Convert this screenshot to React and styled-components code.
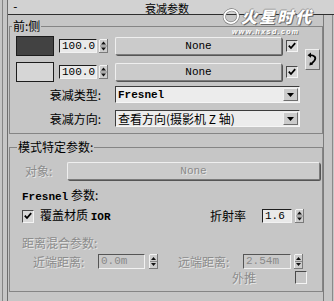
import React from "react";
import styled, { createGlobalStyle } from "styled-components";

const CJK = `"Noto Sans CJK SC", "Noto Sans", sans-serif`;
const MONO = `"Liberation Mono", "Noto Sans CJK SC", monospace`;

const GlobalStyle = createGlobalStyle`
  html, body { margin: 0; padding: 0; }
  body {
    background: #c6c6c6;
    font-family: ${CJK};
    font-size: 12px;
    color: #000;
  }
`;

const Page = styled.div`
  position: relative;
  width: 334px;
  height: 301px;
  display: flex;
  overflow: hidden;
  background: #c6c6c6;
`;

const LeftRail = styled.div`
  flex-shrink: 0;
  margin-left: 2px;
  width: 4px;
  border-left: 1px solid #858585;
  border-right: 1px solid #6e6e6e;
`;

const Main = styled.div`
  flex: 1;
  min-width: 0;
  display: flex;
  flex-direction: column;
`;

const TitleBar = styled.div`
  height: 14px;
  display: flex;
  align-items: center;
  padding: 0 12px 0 4px;
  background: #d2d2d2;
  border-bottom: 1px solid #2e2e2e;
`;

const Collapse = styled.span`
  width: 12px;
  font-family: ${MONO};
  font-size: 11px;
  line-height: 10px;
`;

const Title = styled.span`
  flex: 1;
  text-align: center;
  font-size: 11px;
  line-height: 14px;
  padding-top: 1px;
`;

const Spacer = styled.span`
  width: 12px;
`;

const BodyRow = styled.div`
  flex: 1;
  display: flex;
`;

const Content = styled.div`
  flex: 1;
  padding: 4px 0 0 1px;
`;

const RightRail = styled.div`
  width: 9px;
  margin-right: 1px;
  border-left: 1px solid #7c7c7c;
  border-right: 1px solid #8a8a8a;
`;

const Group = styled.fieldset`
  margin: ${(p) => p.$top || 0}px 0 0 0;
  padding: ${(p) => p.$pad};
  border: 1px solid #858585;
  min-width: 0;
`;

const Legend = styled.legend`
  margin-left: ${(p) => p.$shift}px;
  padding: 0 1px;
  font-size: 12px;
  line-height: 14px;
`;

const TopArea = styled.div`
  display: flex;
  align-items: center;
`;

const SwatchColumn = styled.div`
  display: flex;
  flex-direction: column;
  gap: 6px;
`;

const ColorRow = styled.div`
  display: flex;
  align-items: center;
  height: 20px;
`;

const Swatch = styled.div`
  box-sizing: border-box;
  width: 38px;
  height: 20px;
  margin-right: 5px;
  background: ${(p) => p.$color};
  border: 1px solid #1c1c1c;
`;

const Spinner = styled.div`
  display: flex;
  align-items: center;
  gap: ${(p) => p.$gap || 2}px;
`;

const NumField = styled.div`
  box-sizing: border-box;
  width: ${(p) => p.$w}px;
  height: ${(p) => p.$h || 14}px;
  padding-left: 2px;
  background: ${(p) => (p.$disabled ? "#c9c9c9" : "#e9e9e9")};
  border-top: 1px solid ${(p) => (p.$disabled ? "#555" : "#1e1e1e")};
  border-left: 1px solid ${(p) => (p.$disabled ? "#555" : "#1e1e1e")};
  border-bottom: 1px solid #f2f2f2;
  border-right: 1px solid #f2f2f2;
  font-family: ${MONO};
  font-size: 11px;
  line-height: ${(p) => (p.$h || 14) - 2}px;
  color: ${(p) => (p.$disabled ? "#8a8a8a" : "#000")};
  white-space: nowrap;
`;

const ArrowBox = styled.svg`
  display: block;
  flex-shrink: 0;
`;

const SpinArrows = ({ h = 14, w = 9, disabled }) => {
  const c = disabled ? "#6a6a6a" : "#111";
  const mid = h / 2;
  return (
    <ArrowBox width={w} height={h} viewBox={`0 0 ${w} ${h}`}>
      <rect x="0.5" y="0.5" width={w - 1} height={h - 1} fill="#cdcdcd" stroke="#7a7a7a" />
      <line x1="0.5" y1="0.5" x2={w - 1} y2="0.5" stroke="#f2f2f2" />
      <line x1="0.5" y1="0.5" x2="0.5" y2={h - 1} stroke="#f2f2f2" />
      <line x1="1" y1={mid} x2={w - 1} y2={mid} stroke="#8a8a8a" />
      <polygon points={`${w / 2 - 2.5},${mid - 1.5} ${w / 2 + 2.5},${mid - 1.5} ${w / 2},${mid - 4.5}`} fill={c} />
      <polygon points={`${w / 2 - 2.5},${mid + 1.5} ${w / 2 + 2.5},${mid + 1.5} ${w / 2},${mid + 4.5}`} fill={c} />
    </ArrowBox>
  );
};

const MapButton = styled.div`
  box-sizing: border-box;
  ${(p) => (p.$w ? `width: ${p.$w}px;` : "flex: 1;")}
  height: 18px;
  margin-left: ${(p) => p.$ml || 0}px;
  display: flex;
  align-items: center;
  justify-content: center;
  background: #cbcbcb;
  border: 1px solid #7b7b7b;
  border-top-color: #efefef;
  border-left-color: #efefef;
  border-radius: 2px;
  box-shadow: 1px 1px 0 #555;
  font-family: ${MONO};
  font-size: 11px;
  color: ${(p) => (p.$disabled ? "#8a8a8a" : "#000")};
  text-shadow: ${(p) => (p.$disabled ? "1px 1px 0 #e6e6e6" : "none")};
`;

const CheckBox = styled.div`
  box-sizing: border-box;
  flex-shrink: 0;
  width: 12px;
  height: ${(p) => p.$h || 12}px;
  margin-left: ${(p) => p.$ml || 0}px;
  background: ${(p) => (p.$disabled ? "#c6c6c6" : "#d9d9d9")};
  border-top: 1px solid #4a4a4a;
  border-left: 1px solid #4a4a4a;
  border-bottom: 1px solid #f4f4f4;
  border-right: 1px solid #f4f4f4;
  display: flex;
  align-items: center;
  justify-content: center;
`;

const Tick = () => (
  <svg width="8" height="8" viewBox="0 0 8 8">
    <path d="M0.8 3.6 L3 6 L7.2 1.2" fill="none" stroke="#000" strokeWidth="1.8" />
  </svg>
);

const SwapButton = styled.div`
  box-sizing: border-box;
  width: 15px;
  height: 21px;
  margin-left: 7px;
  display: flex;
  align-items: center;
  justify-content: center;
  background: #cbcbcb;
  border: 1px solid #6e6e6e;
  border-top-color: #f0f0f0;
  border-left-color: #f0f0f0;
`;

const SwapIcon = () => (
  <svg width="11" height="15" viewBox="0 0 11 15">
    <path d="M2.5 3.2 C7.5 3 9.5 5.5 7.5 8.5 L4.2 12.2" fill="none" stroke="#000" strokeWidth="1.8" />
    <polygon points="0.5,3.2 4,0.6 4,5.8" fill="#000" />
    <polygon points="2.4,13.6 3,10 6,12.6" fill="#000" />
  </svg>
);

const FieldRow = styled.div`
  display: flex;
  align-items: center;
  height: ${(p) => p.$h || 17}px;
  margin-top: ${(p) => p.$mt || 0}px;
`;

const FieldLabel = styled.span`
  box-sizing: border-box;
  flex-shrink: 0;
  width: ${(p) => p.$w}px;
  margin-left: ${(p) => p.$ml || 0}px;
  padding-right: ${(p) => p.$pr || 0}px;
  text-align: ${(p) => p.$align || "left"};
  font-size: 12px;
  line-height: 14px;
  white-space: nowrap;
  color: ${(p) => (p.$disabled ? "#8c8c8c" : "#000")};
  text-shadow: ${(p) => (p.$disabled ? "1px 1px 0 #e6e6e6" : "none")};
`;

const Dropdown = styled.div`
  box-sizing: border-box;
  width: 185px;
  height: 17px;
  display: flex;
  align-items: center;
  background: #ececec;
  border-top: 1px solid #3c3c3c;
  border-left: 1px solid #3c3c3c;
  border-bottom: 1px solid #f6f6f6;
  border-right: 1px solid #f6f6f6;
`;

const DropText = styled.span`
  flex: 1;
  padding-left: 2px;
  font-family: ${(p) => (p.$mono ? MONO : CJK)};
  font-size: ${(p) => (p.$mono ? 11 : 12)}px;
  font-weight: ${(p) => (p.$mono ? 700 : 400)};
  line-height: 14px;
  white-space: nowrap;
`;

const DropArrow = styled.div`
  box-sizing: border-box;
  width: 15px;
  height: 13px;
  margin-right: 1px;
  display: flex;
  align-items: center;
  justify-content: center;
  background: #cbcbcb;
  border: 1px solid #6e6e6e;
  border-top-color: #f0f0f0;
  border-left-color: #f0f0f0;
`;

const Caret = () => (
  <svg width="7" height="4" viewBox="0 0 7 4">
    <polygon points="0,0 7,0 3.5,4" fill="#000" />
  </svg>
);

const Heading = styled.div`
  margin-top: ${(p) => p.$mt}px;
  font-size: 12px;
  line-height: 14px;
  white-space: nowrap;
  color: ${(p) => (p.$disabled ? "#8c8c8c" : "#000")};
  text-shadow: ${(p) => (p.$disabled ? "1px 1px 0 #e6e6e6" : "none")};
`;

const Mono = styled.span`
  font-family: ${MONO};
  font-size: 11px;
  font-weight: 700;
`;

const Watermark = styled.div`
  position: absolute;
  top: 4px;
  left: 222px;
  width: 104px;
  color: #fff;
  pointer-events: none;
`;

const MarkLine = styled.div`
  display: flex;
  align-items: center;
  gap: 1px;
  height: 24px;
`;

const MarkText = styled.span`
  font-family: ${CJK};
  font-size: 16px;
  font-weight: 900;
  font-style: italic;
  line-height: 24px;
  letter-spacing: 2px;
  text-shadow: 1px 1px 0 #6b6b6b, -1px 0 0 #8a8a8a, 0 -1px 0 #9a9a9a;
`;

const MarkUrl = styled.div`
  margin: 0 0 0 10px;
  font-family: "Liberation Sans", sans-serif;
  font-size: 7px;
  font-weight: 700;
  font-style: italic;
  letter-spacing: 1.4px;
  line-height: 8px;
  text-shadow: 1px 1px 0 #777;
`;

const MarkSwoosh = () => (
  <svg width="18" height="18" viewBox="0 0 18 18">
    <ellipse cx="9" cy="9.5" rx="7" ry="6.5" fill="none" stroke="#777" strokeWidth="3" transform="rotate(-25 9 9)" />
    <ellipse cx="9" cy="9.5" rx="7" ry="6.5" fill="none" stroke="#fff" strokeWidth="1.8" transform="rotate(-25 9 9)" />
  </svg>
);

export default function App() {
  return (
    <Page>
      <GlobalStyle />
      <LeftRail />
      <Main>
        <TitleBar>
          <Collapse>-</Collapse>
          <Title>衰减参数</Title>
          <Spacer />
        </TitleBar>
        <BodyRow>
          <Content>
            <Group $pad="3px 2px 6px 6px">
              <Legend $shift={-4}>前:侧</Legend>
              <TopArea>
                <SwatchColumn>
                  <ColorRow>
                    <Swatch $color="#424242" />
                    <Spinner>
                      <NumField $w={38}>100.0</NumField>
                      <SpinArrows />
                    </Spinner>
                    <MapButton $w={167} $ml={7}>None</MapButton>
                    <CheckBox $ml={4}>
                      <Tick />
                    </CheckBox>
                  </ColorRow>
                  <ColorRow>
                    <Swatch $color="#d6d6d6" />
                    <Spinner>
                      <NumField $w={38}>100.0</NumField>
                      <SpinArrows />
                    </Spinner>
                    <MapButton $w={167} $ml={7}>None</MapButton>
                    <CheckBox $ml={4}>
                      <Tick />
                    </CheckBox>
                  </ColorRow>
                </SwatchColumn>
                <SwapButton>
                  <SwapIcon />
                </SwapButton>
              </TopArea>
              <FieldRow $mt={4}>
                <FieldLabel $w={99} $pr={14} $align="right">衰减类型:</FieldLabel>
                <Dropdown>
                  <DropText $mono>Fresnel</DropText>
                  <DropArrow>
                    <Caret />
                  </DropArrow>
                </Dropdown>
              </FieldRow>
              <FieldRow $mt={7}>
                <FieldLabel $w={99} $pr={14} $align="right">衰减方向:</FieldLabel>
                <Dropdown>
                  <DropText>查看方向(摄影机 Z 轴)</DropText>
                  <DropArrow>
                    <Caret />
                  </DropArrow>
                </Dropdown>
              </FieldRow>
            </Group>

            <Group $top={6} $pad="8px 2px 6px 12px">
              <Legend $shift={-5}>模式特定参数:</Legend>
              <FieldRow $h={18}>
                <FieldLabel $w={42} $ml={3} $disabled>对象:</FieldLabel>
                <MapButton $disabled>None</MapButton>
              </FieldRow>
              <Heading $mt={8}>
                <Mono>Fresnel</Mono> 参数:
              </Heading>
              <FieldRow $h={14} $mt={5}>
                <CheckBox $h={13}>
                  <Tick />
                </CheckBox>
                <FieldLabel $w={170} $ml={6}>
                  覆盖材质 <Mono>IOR</Mono>
                </FieldLabel>
                <FieldLabel $w={52}>折射率</FieldLabel>
                <Spinner $gap={3}>
                  <NumField $w={30}>1.6</NumField>
                  <SpinArrows />
                </Spinner>
              </FieldRow>
              <Heading $mt={13} $disabled>距离混合参数:</Heading>
              <FieldRow $h={15} $mt={4}>
                <FieldLabel $w={65} $ml={11} $disabled>近端距离:</FieldLabel>
                <Spinner $gap={4}>
                  <NumField $w={47} $h={15} $disabled>0.0m</NumField>
                  <SpinArrows h={15} />
                </Spinner>
                <FieldLabel $w={65} $ml={20} $disabled>远端距离:</FieldLabel>
                <Spinner $gap={3}>
                  <NumField $w={48} $h={15} $disabled>2.54m</NumField>
                  <SpinArrows h={15} />
                </Spinner>
              </FieldRow>
              <FieldRow $h={15} $mt={1}>
                <FieldLabel $w={63} $ml={210} $disabled>外推</FieldLabel>
                <CheckBox $h={13} $disabled />
              </FieldRow>
            </Group>
          </Content>
          <RightRail />
        </BodyRow>
      </Main>
      <Watermark>
        <MarkLine>
          <MarkSwoosh />
          <MarkText>火星时代</MarkText>
        </MarkLine>
        <MarkUrl>www.hxsd.com</MarkUrl>
      </Watermark>
    </Page>
  );
}
